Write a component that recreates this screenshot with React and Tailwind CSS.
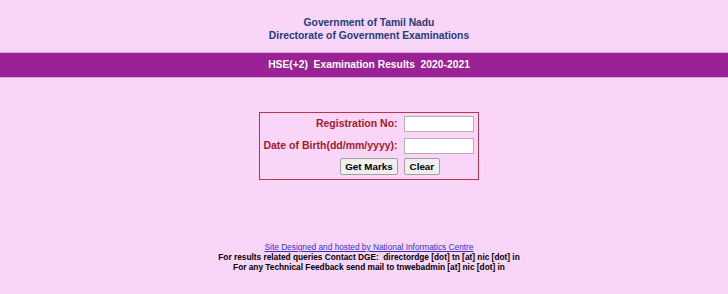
export default function App() {
  return (
    <div className="min-h-[294px] w-full bg-[#f9d6f7] pl-[10px] text-center" style={{ fontFamily: '"Liberation Sans", Arial, sans-serif' }}>
      <div className="pt-[16px] text-[10.3px] font-bold leading-[13px] text-[#1f3c7c]">
        <div>Government of Tamil Nadu</div>
        <div>Directorate of Government Examinations</div>
      </div>
      <div className="-ml-[10px] mt-[10px] border-y border-[#dca4d8] bg-[#9a2196] pl-[10px] text-[10.3px] font-bold leading-[24px] text-white whitespace-pre">
        HSE(+2)  Examination Results  2020-2021
      </div>
      <div className="mt-[34px] flex justify-center">
        <div className="grid grid-cols-[auto_auto] gap-x-[6px] border border-[#b1364e] pl-[3px] pr-[4px] text-left">
          <div className="flex h-[22px] items-center justify-end whitespace-nowrap text-[10.5px] font-bold text-[#a3192c]">Registration No:</div>
          <div className="flex h-[22px] items-center">
            <input className="h-[16px] w-[70px] border border-[#b0b0b0] bg-white" />
          </div>
          <div className="flex h-[22px] items-center justify-end whitespace-nowrap text-[10.5px] font-bold text-[#a3192c]">Date of Birth(dd/mm/yyyy):</div>
          <div className="flex h-[22px] items-center">
            <input className="h-[16px] w-[70px] border border-[#b0b0b0] bg-white" />
          </div>
          <div className="flex h-[22px] items-start justify-end pt-[1px]">
            <button className="h-[17px] rounded-[2px] border border-[#a0a0a0] bg-[#efefef] px-[4px] text-[9.8px] font-bold leading-none text-black">Get Marks</button>
          </div>
          <div className="flex h-[22px] items-start pt-[1px]">
            <button className="h-[17px] rounded-[2px] border border-[#a0a0a0] bg-[#efefef] px-[5px] text-[9.8px] font-bold leading-none text-black">Clear</button>
          </div>
        </div>
      </div>
      <div className="mt-[62px] text-[8.3px] leading-[10px]">
        <div><a href="#" className="text-[#3333cc] underline">Site Designed and hosted by National Informatics Centre</a></div>
        <div className="font-bold text-black whitespace-pre">For results related queries Contact DGE:  directordge [dot] tn [at] nic [dot] in</div>
        <div className="font-bold text-black">For any Technical Feedback send mail to tnwebadmin [at] nic [dot] in</div>
      </div>
    </div>
  );
}
